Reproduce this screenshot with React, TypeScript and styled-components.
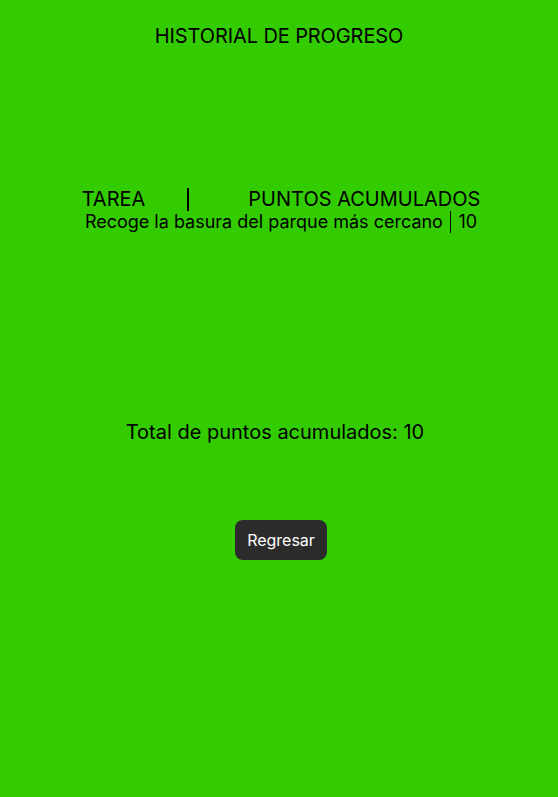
import React from "react";
import styled, { createGlobalStyle } from "styled-components";

const Global = createGlobalStyle`
  html, body { margin: 0; padding: 0; background: #33cc00; }
  body { font-family: Inter, "Noto Sans", sans-serif; color: #000; }
`;

const Page = styled.div`
  min-height: 797px;
  display: flex;
  flex-direction: column;
  align-items: center;
  padding-left: 4px;
  box-sizing: border-box;
  background: #33cc00;
`;

const Title = styled.h1`
  margin: 24px 0 0 -4px;
  font-size: 20px;
  font-weight: 400;
  line-height: 24px;
  letter-spacing: -0.1px;
`;

const Table = styled.div`
  margin-top: 139px;
  display: flex;
  flex-direction: column;
  align-items: center;
`;

const HeaderRow = styled.div`
  display: flex;
  align-items: center;
  font-size: 20px;
  line-height: 24px;
`;

const Sep = styled.span<{ $left: number; $right: number; $h: number; $w: number }>`
  display: inline-block;
  width: ${(p) => p.$w}px;
  height: ${(p) => p.$h}px;
  background: #000;
  margin: 0 ${(p) => p.$right}px 0 ${(p) => p.$left}px;
`;

const Cell = styled.span`
  white-space: nowrap;
`;

const Row = styled.div`
  display: flex;
  align-items: center;
  font-size: 18px;
  line-height: 20px;
`;

const Total = styled.p`
  margin: 187px 0 0 -12px;
  font-size: 20px;
  line-height: 24px;
`;

const Button = styled.button`
  margin-top: 76px;
  height: 40px;
  padding: 0 12px;
  border: none;
  border-radius: 8px;
  background: #2b2b2b;
  color: #ffffff;
  font-family: Inter, "Noto Sans", sans-serif;
  font-size: 16px;
  cursor: pointer;
`;

export default function App() {
  return (
    <>
      <Global />
      <Page>
        <Title>HISTORIAL DE PROGRESO</Title>
        <Table>
          <HeaderRow>
            <Cell>TAREA</Cell>
            <Sep $left={42} $right={59} $h={23} $w={2} />
            <Cell>PUNTOS ACUMULADOS</Cell>
          </HeaderRow>
          <Row>
            <Cell>Recoge la basura del parque más cercano</Cell>
            <Sep $left={7} $right={7} $h={22} $w={1.5} />
            <Cell>10</Cell>
          </Row>
        </Table>
        <Total>Total de puntos acumulados: 10</Total>
        <Button>Regresar</Button>
      </Page>
    </>
  );
}
